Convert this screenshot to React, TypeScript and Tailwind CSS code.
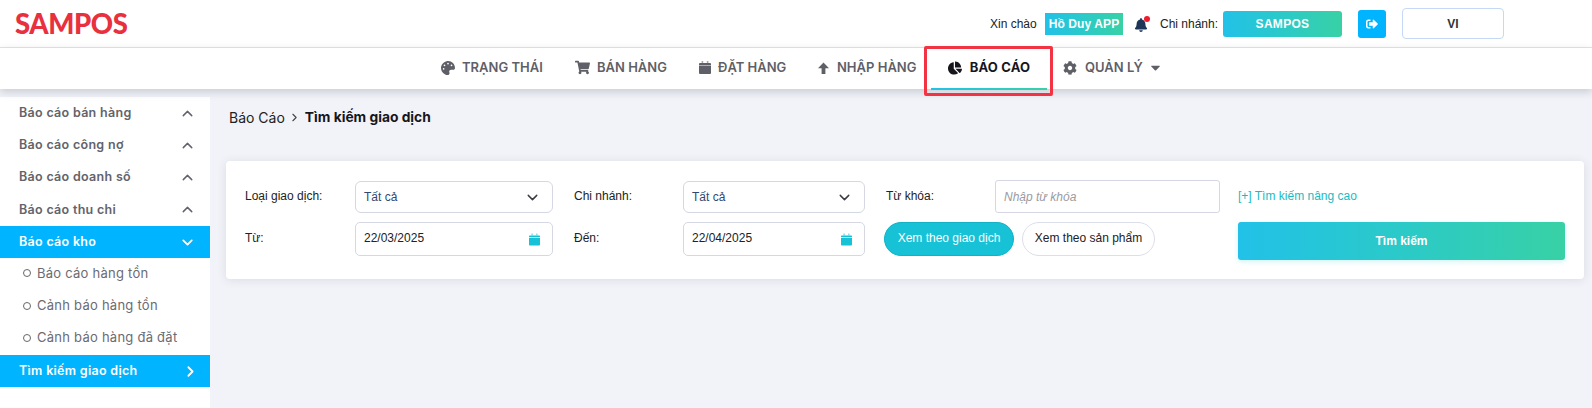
import React from "react";
import { FaPalette, FaShoppingCart, FaChartPie, FaCog, FaCaretDown, FaBell, FaSignOutAlt } from "react-icons/fa";
import { ChevronDown, ChevronUp, ChevronRight } from "lucide-react";

const grad = "bg-gradient-to-r from-[#22c1e8] to-[#38d1a5]";

function Cal({ w, h, className }: { w: number; h: number; className?: string }) {
  return (
    <svg width={w} height={h} viewBox="0 0 12 13" fill="currentColor" className={className}>
      <rect x="2.6" y="0" width="1.6" height="2" opacity="0.55" />
      <rect x="7.8" y="0" width="1.6" height="2" opacity="0.55" />
      <path d="M1 2H11A1 1 0 0 1 12 3V3.9H0V3A1 1 0 0 1 1 2Z" />
      <path d="M0 4.5H12V12A1 1 0 0 1 11 13H1A1 1 0 0 1 0 12Z" />
    </svg>
  );
}

function ArrowUpIcon({ className }: { className?: string }) {
  return (
    <svg width="11" height="12" viewBox="0 0 11 12" fill="currentColor" className={className}>
      <path d="M5.5 0.5L11 6.2H7.4V12H3.6V6.2H0Z" />
    </svg>
  );
}

function NavItem({ icon, label, className }: { icon: React.ReactNode; label: string; className: string }) {
  return (
    <div className={`flex items-center pb-[2px] text-[#5f5f68] text-[13px] font-semibold whitespace-nowrap ${className}`}>
      {icon}
      <span>{label}</span>
    </div>
  );
}

function Group({ label }: { label: string }) {
  return (
    <div className="h-[32.25px] flex items-center justify-between pl-[19px] pr-[14px] text-[#63636b] text-[12.5px] font-semibold tracking-[0.3px]">
      <span>{label}</span>
      <ChevronUp size={17} strokeWidth={2} />
    </div>
  );
}

function Sub({ label }: { label: string }) {
  return (
    <div className="h-[32.25px] flex items-center pb-[2px] pl-[23px] text-[#6b6b72] text-[13px] tracking-[0.25px]">
      <span className="w-[8px] h-[8px] rounded-full border border-[#66666c] mr-[6px]" />
      <span>{label}</span>
    </div>
  );
}

function Select({ width }: { width: string }) {
  return (
    <div className={`${width} h-[32px] border border-[#d5d8e2] rounded-[6px] flex items-center justify-between pl-[8px] pr-[11px] text-[#2e4a73] text-[12px]`}>
      <span>Tất cả</span>
      <ChevronDown size={17} className="text-[#3b3b42]" strokeWidth={2} />
    </div>
  );
}

function DateBox({ width, value }: { width: string; value: string }) {
  return (
    <div className={`${width} h-[34px] border border-[#d5d8e2] rounded-[5px] flex items-center justify-between pl-[8px] pr-[12px] text-[#222] text-[12px]`}>
      <span className="pb-[3px]">{value}</span>
      <Cal w={11} h={13} className="text-[#17c1d6]" />
    </div>
  );
}

export default function App() {
  return (
    <div className="w-[1592px] h-[408px] overflow-hidden bg-[#f1f3f8] font-['Liberation_Sans',Arial,sans-serif] relative">
      <header className="h-[47px] bg-white flex items-center pl-[15px] border-b border-[#e4e5e8] box-content whitespace-nowrap">
        <div className="font-['Lato',sans-serif] font-black text-[27.5px] leading-none text-[#e8303f] tracking-[-0.4px] w-[975px]">SAMPOS</div>
        <span className="text-[12px] text-[#222] w-[47px]">Xin chào</span>
        <span className={`ml-[8px] w-[78px] h-[22px] flex items-center justify-center text-white text-[12px] font-bold tracking-[0.1px] ${grad}`}>Hồ Duy APP</span>
        <span className="relative ml-[11px] w-[14px] h-[16px]">
          <FaBell size={14} className="text-[#1d3557] absolute left-0 top-[2px]" />
          <span className="absolute right-[-2px] top-0 w-[6px] h-[6px] rounded-full bg-[#ef1c2e]" />
        </span>
        <span className="ml-[12px] text-[12px] text-[#222] w-[63px]">Chi nhánh:</span>
        <div className={`w-[119px] h-[26px] rounded-[3px] flex items-center justify-center text-white text-[12px] font-bold tracking-[0.3px] ${grad}`}>SAMPOS</div>
        <div className="ml-[16px] w-[28px] h-[28px] rounded-[3px] bg-[#00b4ff] flex items-center justify-center text-white">
          <FaSignOutAlt size={12} />
        </div>
        <div className="ml-[16px] w-[102px] h-[31px] rounded-[4px] border border-[#c5d8f5] flex items-center justify-center text-[#333] text-[12px] font-bold">VI</div>
      </header>

      <nav className="h-[41px] bg-white flex items-center pl-[441px] shadow-[0_3px_8px_rgba(60,60,80,0.22)] relative z-10 font-['Inter',sans-serif]">
        <NavItem className="w-[134px]" icon={<FaPalette size={14} className="mr-[7px]" />} label="TRẠNG THÁI" />
        <NavItem className="w-[124px]" icon={<FaShoppingCart size={15} className="mr-[7px]" />} label="BÁN HÀNG" />
        <NavItem className="w-[119px]" icon={<Cal w={12} h={13} className="mr-[7px]" />} label="ĐẶT HÀNG" />
        <NavItem className="w-[113px]" icon={<ArrowUpIcon className="mr-[8px]" />} label="NHẬP HÀNG" />
        <div className="relative w-[116px] h-[41px] flex items-center justify-center pb-[2px] text-[#16161c] text-[13px] font-bold tracking-[0.2px]">
          <FaChartPie size={14} className="mr-[8px]" />
          <span>BÁO CÁO</span>
          <span className={`absolute left-0 right-0 bottom-[-1px] h-[2px] ${grad}`} />
          <span className="absolute left-[-7px] right-[-6px] top-[-2px] bottom-[-7px] border-[3px] border-[#f23344] rounded-[2px]" />
        </div>
        <NavItem className="ml-[16px]" icon={<FaCog size={14} className="mr-[8px]" />} label="QUẢN LÝ" />
        <FaCaretDown size={15} className="ml-[5px] mb-[2px] text-[#5f5f68]" />
      </nav>

      <div className="flex mt-[8px] h-[311px]">
        <aside className="w-[210px] h-full bg-white font-['Inter',sans-serif]">
          <Group label="Báo cáo bán hàng" />
          <Group label="Báo cáo công nợ" />
          <Group label="Báo cáo doanh số" />
          <Group label="Báo cáo thu chi" />
          <div className="h-[32.25px] flex items-center justify-between pl-[19px] pr-[14px] bg-[#00b4ff] text-white text-[12.5px] font-semibold tracking-[0.3px]">
            <span>Báo cáo kho</span>
            <ChevronDown size={17} strokeWidth={2.5} />
          </div>
          <Sub label="Báo cáo hàng tồn" />
          <Sub label="Cảnh báo hàng tồn" />
          <Sub label="Cảnh báo hàng đã đặt" />
          <div className="h-[32.25px] flex items-center justify-between pl-[19px] pr-[11px] bg-[#00b4ff] text-white text-[12.5px] font-semibold tracking-[0.3px]">
            <span>Tìm kiếm giao dịch</span>
            <ChevronRight size={17} strokeWidth={2.5} />
          </div>
        </aside>

        <main className="flex-1 pl-[16px] pr-[8px]">
          <div className="h-[38px] pl-[3px] flex items-center text-[14px] text-[#222] mt-[1px] font-['Inter',sans-serif]">
            <span>Báo Cáo</span>
            <ChevronRight size={13} className="mx-[3px] text-[#444]" />
            <span className="font-bold text-[13.8px] text-[#16161c] ml-[1px]">Tìm kiếm giao dịch</span>
          </div>
          <section className="mt-[25px] h-[118px] bg-white rounded-[4px] shadow-[0_1px_10px_rgba(60,60,90,0.12)] flex pl-[19px] pt-[20px] text-[12px] text-[#222]">
            <div className="flex flex-col gap-[9px]">
              <div className="flex items-center h-[32px]">
                <span className="w-[110px] pb-[2px]">Loại giao dịch:</span>
                <Select width="w-[198px]" />
                <span className="w-[109px] ml-[21px] pb-[2px]">Chi nhánh:</span>
                <Select width="w-[182px]" />
              </div>
              <div className="flex items-center h-[34px]">
                <span className="w-[110px] pb-[2px]">Từ:</span>
                <DateBox width="w-[198px]" value="22/03/2025" />
                <span className="w-[109px] ml-[21px] pb-[2px]">Đến:</span>
                <DateBox width="w-[182px]" value="22/04/2025" />
              </div>
            </div>
            <div className="flex flex-col gap-[9px] ml-[21px] -mt-[1px]">
              <div className="flex items-center h-[33px]">
                <span className="w-[109px] pb-[1px]">Từ khóa:</span>
                <div className="w-[225px] h-[33px] border border-[#d5d8e2] rounded-[3px] flex items-center pl-[8px] italic text-[#9a9aa2]">Nhập từ khóa</div>
              </div>
              <div className="flex items-center gap-[8px] h-[34px] -ml-[2px]">
                <div className="w-[130px] h-[34px] pb-[2px] rounded-full bg-[#17c1d6] border border-[#12b3c7] flex items-center justify-center text-white">Xem theo giao dịch</div>
                <div className="w-[133px] h-[34px] pb-[2px] rounded-full border border-[#dcdfe9] flex items-center justify-center text-[#222]">Xem theo sản phẩm</div>
              </div>
            </div>
            <div className="flex flex-col ml-[18px] w-[327px] -mt-[1px]">
              <div className="h-[33px] flex items-center pb-[1px] text-[#17bcc4]">[+] Tìm kiếm nâng cao</div>
              <div className={`mt-[9px] h-[38px] rounded-[3px] flex items-center justify-center text-white font-bold shadow-[0_2px_5px_rgba(40,200,200,0.2)] ${grad}`}>Tìm kiếm</div>
            </div>
          </section>
        </main>
      </div>
    </div>
  );
}
